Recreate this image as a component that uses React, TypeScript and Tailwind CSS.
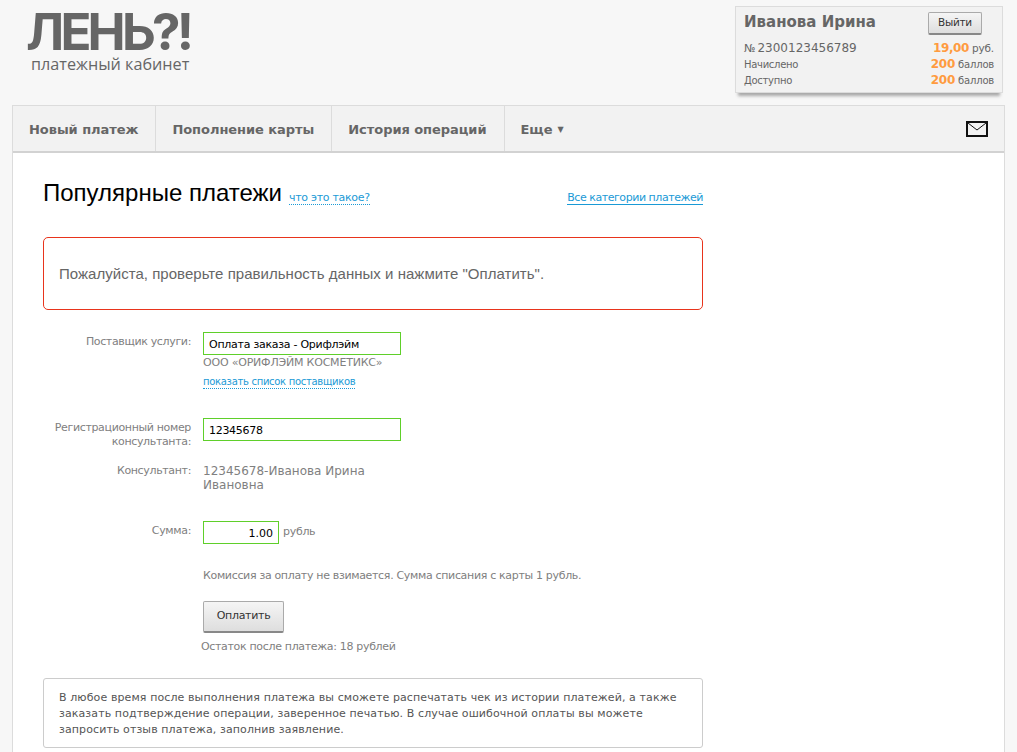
import React from 'react';

const tahoma = { fontFamily: '"DejaVu Sans", sans-serif' };

function Row({ label, children, className = '' }: { label: React.ReactNode; children: React.ReactNode; className?: string }) {
  return (
    <div className={`flex ${className}`}>
      <div className="w-[148px] shrink-0 text-right text-[11px] leading-[14px] tracking-[-0.35px] text-[#808080] pt-[3px]">{label}</div>
      <div className="ml-[12px] flex-1">{children}</div>
    </div>
  );
}

export default function App() {
  return (
    <div className="h-screen overflow-hidden bg-[#f7f7f7] font-['DejaVu_Sans',sans-serif] text-[#666]">
      {/* Header */}
      <header className="h-[105px] flex justify-between pl-[26px] pr-[14px]">
        <div className="pt-[10px] w-[170px]">
          <div className="font-['Inter',sans-serif] font-bold text-[51px] leading-[44px] tracking-[-3.8px] text-[#666]">ЛЕНЬ?!</div>
          <div className="font-['Open_Sans',sans-serif] text-[16.2px] leading-[16px] mt-[2px] pl-[5px] text-[#666]">платежный кабинет</div>
        </div>
        <div className="mt-[6px] w-[268px] h-[87px] bg-[#f2f2f2] border border-[#dcdcdc] shadow-[0_6px_3px_-3px_#a8a8a8] pl-[8px] pr-[8px] pt-[4px]">
          <div className="flex justify-between items-start h-[27px]">
            <div className="font-bold text-[15px] leading-[22px] text-[#666]">Иванова Ирина</div>
            <button className="mt-[1px] mr-[12px] w-[54px] h-[23px] rounded-[2px] border border-[#aaa] border-b-2 border-b-[#888] bg-gradient-to-b from-[#f5f5f5] to-[#dedede] text-[10.5px] tracking-[-0.3px] text-[#333]">Выйти</button>
          </div>
          <div className="flex justify-between items-end h-[19px] text-[#666]">
            <span className="text-[12px] leading-[17px]"><span className="text-[11px] mr-[2px]">№</span>2300123456789</span>
            <span className="text-[10.5px] leading-[17px] tracking-[-0.2px]"><b className="text-[12px] tracking-[-0.4px] text-[#ff9b3f]">19,00</b> руб.</span>
          </div>
          <div className="flex justify-between items-end h-[16px] text-[10px] tracking-[-0.3px]">
            <span className="-translate-y-[1px]">Начислено</span>
            <span className="tracking-[-0.2px]"><b className="text-[12px] text-[#ff9b3f]">200</b> баллов</span>
          </div>
          <div className="flex justify-between items-end h-[16px] text-[10px] tracking-[-0.3px]">
            <span className="-translate-y-[1px]">Доступно</span>
            <span className="tracking-[-0.2px]"><b className="text-[12px] text-[#ff9b3f]">200</b> баллов</span>
          </div>
        </div>
      </header>

      {/* Nav */}
      <div className="mx-[12px] w-[993px] border border-[#dcdcdc] bg-white">
        <nav className="h-[47px] bg-[#f2f2f2] border-b-2 border-[#d2d2d2] flex items-stretch text-[13px] font-bold text-[#666] tracking-[-0.05px]">
          <a className="flex items-center pl-[16px] pr-[17px] pt-[2px] border-r border-[#dcdcdc]">Новый платеж</a>
          <a className="flex items-center pl-[16px] pr-[17px] pt-[2px] border-r border-[#dcdcdc]">Пополнение карты</a>
          <a className="flex items-center pl-[16px] pr-[18px] pt-[2px] border-r border-[#dcdcdc]">История операций</a>
          <a className="flex items-center pl-[15px] pt-[2px]">Еще <span className="ml-[5px] text-[8px]">▼</span></a>
          <div className="ml-auto flex items-center pr-[16px]">
            <svg width="22" height="16" viewBox="0 0 22 16" fill="none" stroke="#111">
              <rect x="1" y="1" width="20" height="14" strokeWidth="2" />
              <path d="M2 2l9 7 9-7" strokeWidth="1" />
            </svg>
          </div>
        </nav>

        {/* Content */}
        <main className="w-[690px] pl-[30px] h-[620px]">
          <div className="flex items-baseline pt-[26px] h-[84px]">
            <h1 className="font-['Liberation_Sans',sans-serif] text-[24px] leading-[28px] text-black">Популярные платежи</h1>
            <a className="ml-[7px] text-[11px] tracking-[-0.3px] text-[#1a9ad6] border-b border-dotted border-[#1a9ad6] leading-[13px]">что это такое?</a>
            <a className="ml-auto text-[11px] tracking-[-0.45px] text-[#1a9ad6] border-b border-[#1a9ad6] leading-[13px]">Все категории платежей</a>
          </div>

          <div className="h-[73px] border border-[#e8341c] rounded-[5px] flex items-center pl-[15px] pt-[1px] font-['Liberation_Sans',sans-serif] text-[15px] tracking-[0.03px] text-[#666]">
            Пожалуйста, проверьте правильность данных и нажмите "Оплатить".
          </div>

          <Row label="Поставщик услуги:" className="mt-[22px]">
            <input readOnly value="Оплата заказа - Орифлэйм" style={tahoma} className="block w-[198px] h-[23px] border border-[#5fcf2a] pl-[5px] pt-[1px] text-[11px] tracking-[-0.27px] text-black bg-white outline-none" />
            <div className="text-[11px] tracking-[-0.2px] leading-[14px] mt-[1px] text-[#808080]">ООО «ОРИФЛЭЙМ КОСМЕТИКС»</div>
            <a className="block w-fit mt-[6px] text-[10px] tracking-[-0.3px] leading-[12px] text-[#1a9ad6] border-b border-dotted border-[#1a9ad6]">показать список поставщиков</a>
          </Row>

          <Row label={<>Регистрационный номер<br />консультанта:</>} className="mt-[29px]">
            <input readOnly value="12345678" style={tahoma} className="block w-[198px] h-[23px] border border-[#5fcf2a] pl-[5px] pt-[2px] text-[11px] tracking-[-0.3px] text-black bg-white outline-none" />
          </Row>

          <Row label="Консультант:" className="mt-[12px]">
            <div className="w-[190px] text-[12px] leading-[14px] text-[#808080] pt-[3px]">12345678-Иванова Ирина Ивановна</div>
          </Row>

          <Row label="Сумма:" className="mt-[29px]">
            <div className="flex items-center">
              <input readOnly value="1.00" style={tahoma} className="block w-[76px] h-[23px] border border-[#5fcf2a] pr-[5px] pt-[2px] text-right text-[11px] text-black bg-white outline-none" />
              <span className="ml-[4px] text-[11px] tracking-[-0.3px] text-[#808080]">рубль</span>
            </div>
            <div className="mt-[25px] text-[11px] leading-[14px] tracking-[-0.33px] text-[#808080]">Комиссия за оплату не взимается. Сумма списания с карты 1 рубль.</div>
            <button className="block mt-[18px] w-[81px] h-[32px] rounded-[2px] border border-[#aaa] border-b-2 border-b-[#888] bg-gradient-to-b from-[#f5f5f5] to-[#dedede] text-[11px] tracking-[-0.3px] text-[#333]">Оплатить</button>
            <div className="mt-[7px] -ml-[2px] text-[11px] leading-[14px] tracking-[-0.33px] text-[#808080]">Остаток после платежа: 18 рублей</div>
          </Row>

          <div className="mt-[24px] h-[70px] border border-[#ccc] rounded-[3px] pl-[15px] pr-[10px] pt-[11px] text-[11px] leading-[16px] text-[#555] tracking-[0.1px]">
            В любое время после выполнения платежа вы сможете распечатать чек из истории платежей, а также заказать подтверждение операции, заверенное печатью. В случае ошибочной оплаты вы можете запросить отзыв платежа, заполнив заявление.
          </div>
        </main>
      </div>
    </div>
  );
}
